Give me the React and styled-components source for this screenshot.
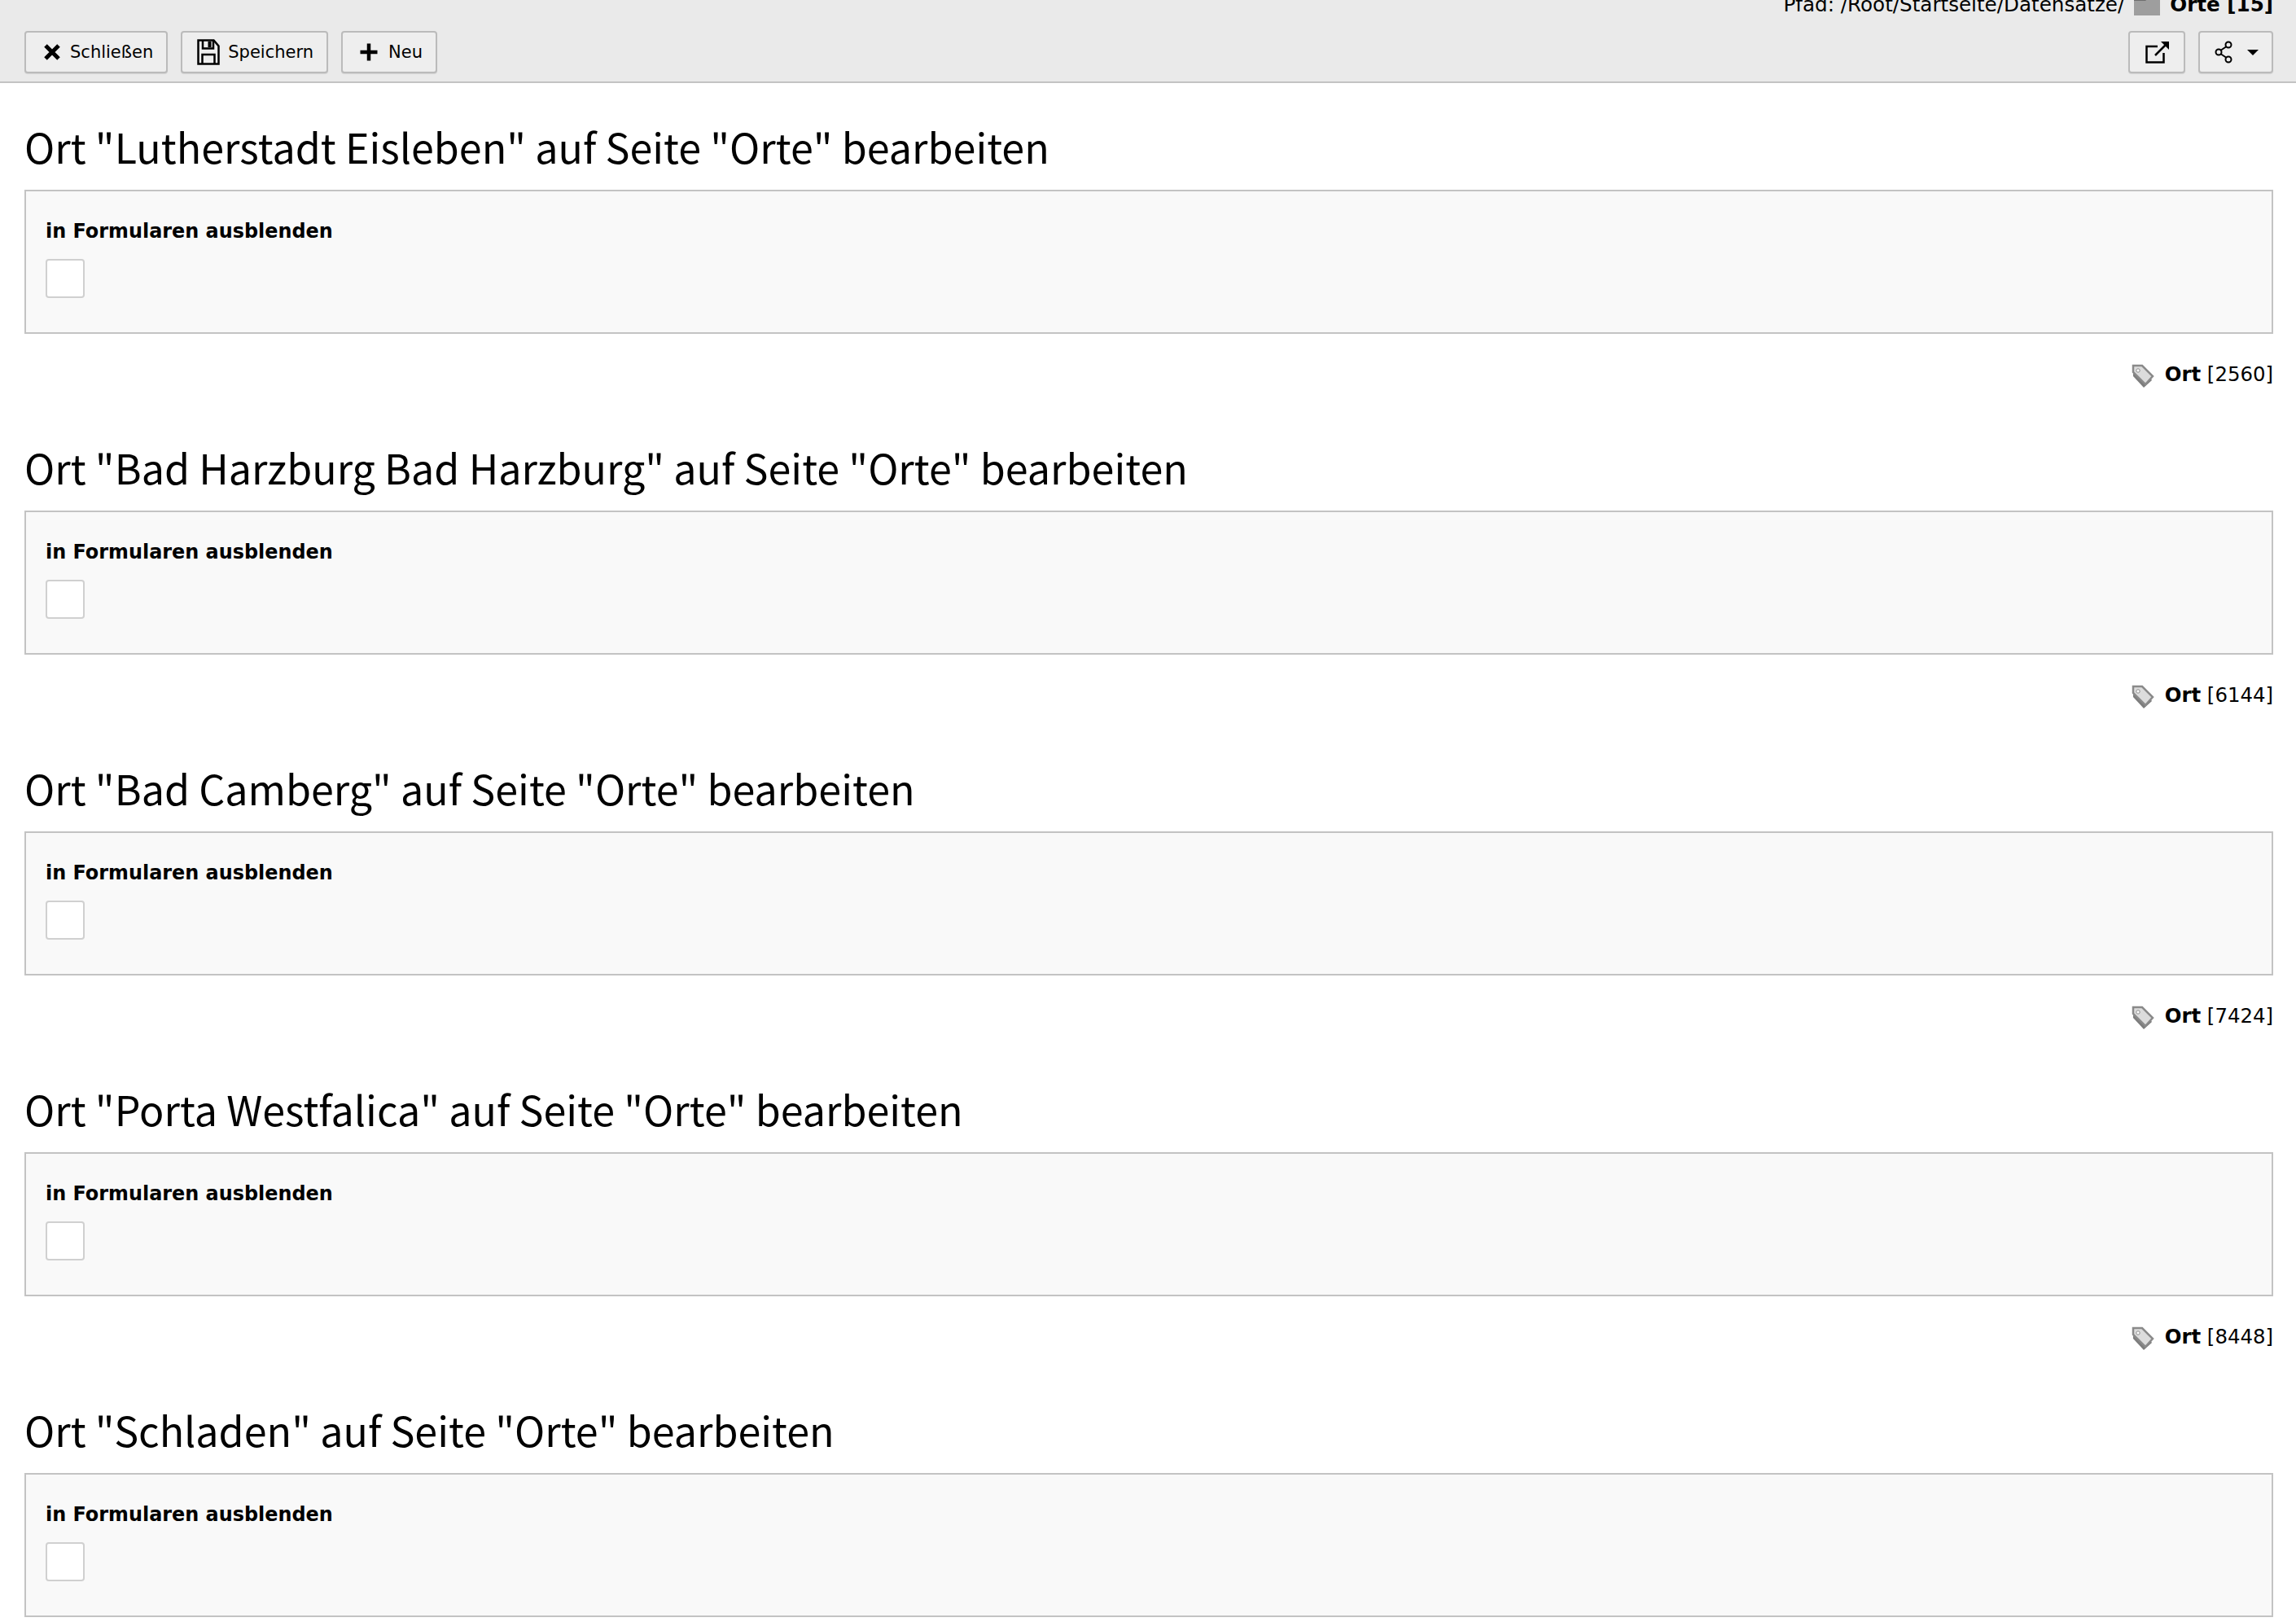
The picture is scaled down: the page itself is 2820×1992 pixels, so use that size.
import styled, { createGlobalStyle } from 'styled-components'

const records = [
  { name: 'Lutherstadt Eisleben', uid: 2560 },
  { name: 'Bad Harzburg Bad Harzburg', uid: 6144 },
  { name: 'Bad Camberg', uid: 7424 },
  { name: 'Porta Westfalica', uid: 8448 },
  { name: 'Schladen', uid: 0 },
]

function CloseIcon() {
  return (
    <svg width="28" height="28" viewBox="0 0 28 28">
      <path d="M6 6l16 16M22 6L6 22" stroke="#000" strokeWidth="5" />
    </svg>
  )
}

function SaveIcon() {
  return (
    <svg width="28" height="32" viewBox="0 0 28 32" fill="none" stroke="#000" strokeWidth="2.500">
      <path d="M1.500 1.500h19l6 7v22h-25z" />
      <path d="M7 1.500v10h13v-10" />
      <path d="M13.500 3h4v7h-4z" fill="#000" stroke="none" />
      <path d="M6.500 30.500V19h15v11.500" />
    </svg>
  )
}

function PlusIcon() {
  return (
    <svg width="28" height="28" viewBox="0 0 28 28">
      <path d="M14 3.500v21M3.500 14h21" stroke="#000" strokeWidth="4.500" />
    </svg>
  )
}

function OpenIcon() {
  return (
    <svg width="32" height="28" viewBox="0 0 32 28" fill="none" stroke="#000" strokeWidth="2.500">
      <path d="M16 7H2.500v19.500h21V15" />
      <path d="M13 18L26 5" />
      <path d="M20 1h10v10z" fill="#000" stroke="none" />
    </svg>
  )
}

function ShareIcon() {
  return (
    <svg width="24" height="28" viewBox="0 0 24 28" fill="none" stroke="#000" strokeWidth="2">
      <circle cx="17" cy="5" r="3.500" />
      <circle cx="5" cy="14" r="3.500" />
      <circle cx="17" cy="23" r="3.500" />
      <path d="M14 7.500L8 11.500M8 16.500L14 20.500" />
    </svg>
  )
}

function FolderIcon() {
  return (
    <svg width="32" height="28" viewBox="0 0 32 28">
      <path d="M0 0h32v28H0z" fill="#9e9e9e" />
      <path d="M0 0h20v5l-6 5H0z" fill="#6e6e6e" />
    </svg>
  )
}

function TagIcon() {
  return (
    <svg width="28" height="30" viewBox="1 -3 28 30" overflow="visible">
      <path d="M2 10v5l13 14 10-9-2-3z" fill="#7d7d7d" />
      <path d="M2 2h11l13 13-9 10L2 10z" fill="#dcdcdc" stroke="#8a8a8a" strokeWidth="2.500" />
      <circle cx="8" cy="8" r="2.200" fill="#fff" stroke="#8a8a8a" />
    </svg>
  )
}

function App() {
  return (
    <>
      <GlobalStyle />
      <DocHeader>
        <PathRow>
          <span>Pfad: /Root/Startseite/Datensätze/</span>
          <FolderIcon />
          <strong>Orte [15]</strong>
        </PathRow>
        <ButtonRow>
          <ButtonGroup>
            <Button $gap={8}><CloseIcon />Schließen</Button>
            <Button $gap={10}><SaveIcon />Speichern</Button>
            <Button $gap={10}><PlusIcon />Neu</Button>
          </ButtonGroup>
          <ButtonGroup>
            <Button aria-label="Neues Fenster"><OpenIcon /></Button>
            <Button aria-label="Teilen" $gap={16}><ShareIcon /><Caret /></Button>
          </ButtonGroup>
        </ButtonRow>
      </DocHeader>
      <Content>
        {records.map((record) => (
          <Record key={record.name}>
            <Title>Ort "{record.name}" auf Seite "Orte" bearbeiten</Title>
            <Panel>
              <FieldLabel>in Formularen ausblenden</FieldLabel>
              <Checkbox />
            </Panel>
            {record.uid > 0 && (
              <Meta>
                <TagIcon />
                <span><strong>Ort</strong> [{record.uid}]</span>
              </Meta>
            )}
          </Record>
        ))}
      </Content>
    </>
  )
}

const GlobalStyle = createGlobalStyle`
    html, body {
        margin: 0;
        height: 100%;
        background: #fff;
        color: #000;
        overflow: hidden;
        font-family: "DejaVu Sans", Verdana, sans-serif;
    }
`;

const DocHeader = styled.header`
    height: 100px;
    background: #eaeaea;
    border-bottom: 2px solid #c3c3c3;
    overflow: hidden;
    padding: 0 28px 0 30px;
`;

const PathRow = styled.div`
    height: 38px;
    margin-top: -14px;
    display: flex;
    justify-content: flex-end;
    align-items: center;
    gap: 12px;
    font-size: 24.600px;
    white-space: nowrap;
    svg {
        flex: none;
    }
`;

const ButtonRow = styled.div`
    display: flex;
    justify-content: space-between;
    margin-top: 14px;
`;

const ButtonGroup = styled.div`
    display: flex;
    gap: 16px;
`;

const Button = styled.button`
    height: 52px;
    padding: 0 16px 0 18px;
    display: flex;
    align-items: center;
    gap: ${(p) => p.$gap || 0}px;
    background: #eeeeee;
    border: 2px solid #bbbbbb;
    border-radius: 4px;
    box-shadow: 0 1px 1px rgba(0, 0, 0, .1);
    color: #000;
    font-family: inherit;
    font-size: 21px;
`;

const Caret = styled.span`
    width: 0;
    height: 0;
    border-left: 7px solid transparent;
    border-right: 7px solid transparent;
    border-top: 7px solid #000;
`;

const Content = styled.main`
    padding: 0 28px 0 30px;
`;

const Record = styled.section`
    height: 394px;
    padding-top: 45px;
    box-sizing: border-box;
`;

const Title = styled.h1`
    margin: 0;
    height: 86px;
    font-family: "Noto Sans CJK SC", "Noto Sans", sans-serif;
    font-weight: 400;
    font-size: 50.200px;
    line-height: 64px;
    white-space: nowrap;
`;

const Panel = styled.div`
    height: 177px;
    box-sizing: border-box;
    padding: 34px 24px 0;
    background: #f9f9f9;
    border: 2px solid #c3c3c3;
`;

const FieldLabel = styled.div`
    font-size: 23.900px;
    font-weight: 700;
    line-height: 30px;
    margin-bottom: 18.500px;
`;

const Checkbox = styled.div`
    width: 48px;
    height: 48px;
    box-sizing: border-box;
    background: #fff;
    border: 2px solid #d0d0d0;
    border-radius: 4px;
`;

const Meta = styled.div`
    display: flex;
    justify-content: flex-end;
    align-items: center;
    gap: 12px;
    margin-top: 34px;
    font-size: 24.400px;
`;

export default App
